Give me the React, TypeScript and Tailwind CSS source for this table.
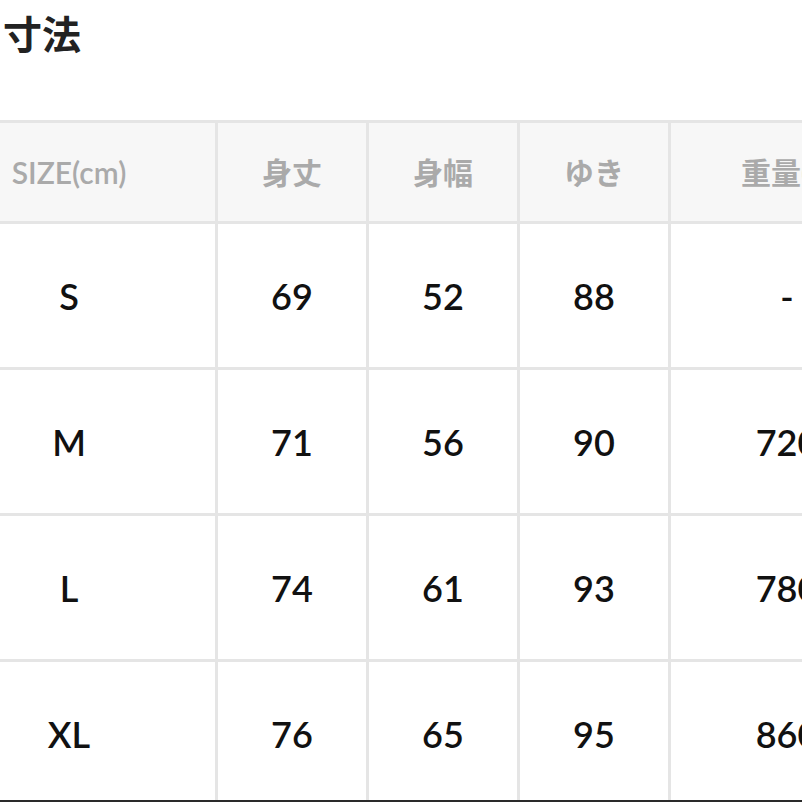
const headers = ["SIZE(cm)", "身丈", "身幅", "ゆき", "重量(g)"];

const rows = [
  ["S", "69", "52", "88", "-"],
  ["M", "71", "56", "90", "720"],
  ["L", "74", "61", "93", "780"],
  ["XL", "76", "65", "95", "860"],
];

const font = { fontFamily: 'Lato, "Noto Sans CJK JP", sans-serif' };

export default function App() {
  return (
    <div className="w-[802px] h-[802px] bg-white overflow-hidden flex flex-col" style={font}>
      <div className="h-[800px] overflow-hidden">
        <h2 className="pl-[3px] pt-[15px] text-[39px] leading-none font-bold text-[#222]">寸法</h2>

        <div className="mt-[66px] ml-[-77px] w-[1000px] grid grid-cols-[292px_148px_148px_148px_232px] gap-[3px] pt-[3px] bg-[#e5e5e5]">
          {headers.map((h) => (
            <div
              key={h}
              className="h-[98px] bg-[#f7f7f7] flex items-center justify-center text-[30px] text-[#aaaaaa] font-semibold"
            >
              {h}
            </div>
          ))}
          {rows.map((row) =>
            row.map((cell, i) => (
              <div
                key={row[0] + i}
                className="h-[143px] bg-white flex items-center justify-center text-[36px] text-[#111] font-semibold"
              >
                {cell}
              </div>
            ))
          )}
        </div>
      </div>
      <div className="h-[2px] bg-[#2a2a2a]" />
    </div>
  );
}
